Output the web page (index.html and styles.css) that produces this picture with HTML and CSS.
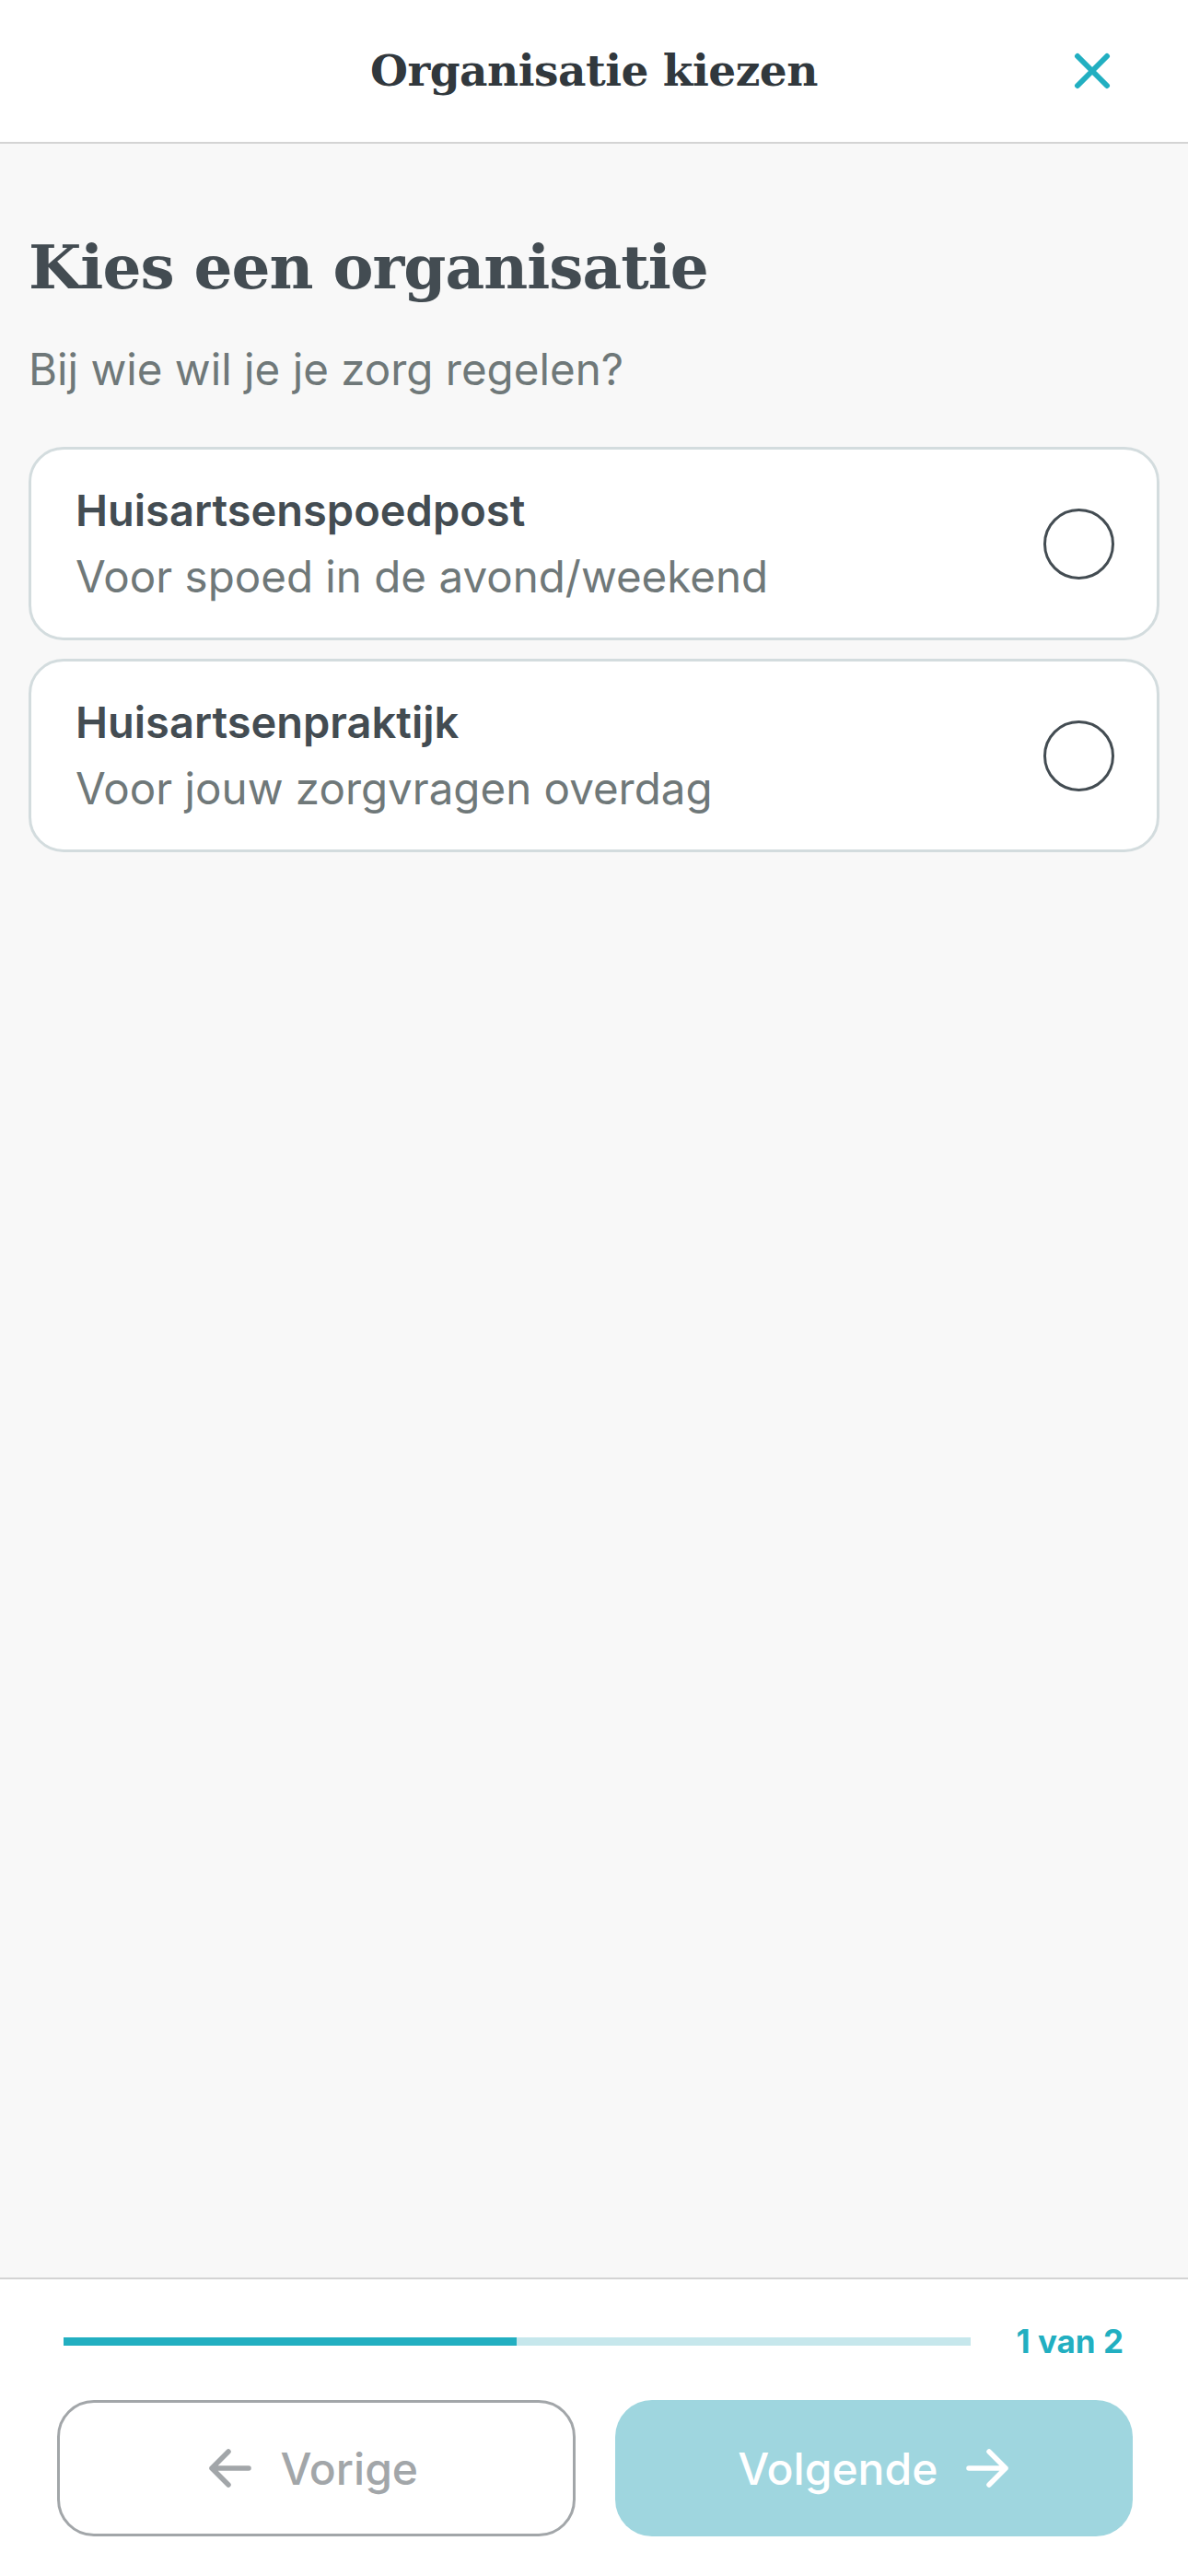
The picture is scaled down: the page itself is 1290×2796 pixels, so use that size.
FILE: index.html
```html
<!DOCTYPE html>
<html lang="nl">
<head>
<meta charset="utf-8">
<title>Organisatie kiezen</title>
<link rel="stylesheet" href="styles.css">
</head>
<body>
<div class="app">
  <header class="topbar">
    <div class="topbar-side"></div>
    <h1 class="topbar-title">Organisatie kiezen</h1>
    <div class="topbar-side topbar-side-right">
      <button class="close-btn" aria-label="Sluiten">
        <svg width="40" height="40" viewBox="0 0 40 40" fill="none">
          <path d="M4 4L36 36M36 4L4 36" stroke="#22afc1" stroke-width="6" stroke-linecap="round"/>
        </svg>
      </button>
    </div>
  </header>

  <main class="content">
    <h2 class="page-title">Kies een organisatie</h2>
    <p class="page-sub">Bij wie wil je je zorg regelen?</p>

    <div class="options">
      <label class="option">
        <div class="option-text">
          <span class="option-title">Huisartsenspoedpost</span>
          <span class="option-desc">Voor spoed in de avond/weekend</span>
        </div>
        <span class="radio"></span>
      </label>
      <label class="option">
        <div class="option-text">
          <span class="option-title">Huisartsenpraktijk</span>
          <span class="option-desc">Voor jouw zorgvragen overdag</span>
        </div>
        <span class="radio"></span>
      </label>
    </div>
  </main>

  <footer class="footer">
    <div class="progress-row">
      <div class="progress-track"><div class="progress-fill" style="width:50%"></div></div>
      <span class="progress-label">1 van 2</span>
    </div>
    <div class="nav-buttons">
      <button class="btn btn-prev">
        <svg width="48" height="44" viewBox="0 0 48 44" fill="none">
          <path d="M44 22H4M22 4L4 22L22 40" stroke="#a2a6a9" stroke-width="5.5" stroke-linecap="round" stroke-linejoin="round"/>
        </svg>
        <span>Vorige</span>
      </button>
      <button class="btn btn-next">
        <span>Volgende</span>
        <svg width="48" height="44" viewBox="0 0 48 44" fill="none">
          <path d="M4 22H44M26 4L44 22L26 40" stroke="#ffffff" stroke-width="5.5" stroke-linecap="round" stroke-linejoin="round"/>
        </svg>
      </button>
    </div>
  </footer>
</div>
</body>
</html>
```

FILE: styles.css
```css
* { box-sizing: border-box; }

html, body {
  margin: 0;
  padding: 0;
}

body {
  background: #f8f8f8;
  font-family: Inter, "Noto Sans", "Liberation Sans", sans-serif;
  color: #434c52;
}

.app {
  min-height: 2796px;
  display: flex;
  flex-direction: column;
}

.topbar {
  height: 156px;
  background: #ffffff;
  border-bottom: 2px solid #d4d4d4;
  display: grid;
  grid-template-columns: 1fr auto 1fr;
  align-items: center;
}

.topbar-title {
  margin: 0;
  font-family: "DejaVu Serif", "Liberation Serif", serif;
  font-weight: bold;
  font-size: 47px;
  color: #31383d;
  letter-spacing: -0.5px;
  padding-bottom: 2px;
}

.topbar-side-right {
  display: flex;
  justify-content: flex-end;
  padding-right: 84px;
}

.close-btn {
  border: 0;
  background: none;
  padding: 0;
  width: 40px;
  height: 40px;
  display: flex;
}

.content {
  flex: 1;
  padding: 89px 31px 0;
}

.page-title {
  margin: 0;
  font-family: "DejaVu Serif", "Liberation Serif", serif;
  font-weight: bold;
  font-size: 66px;
  line-height: 90px;
  color: #434c52;
  letter-spacing: -1px;
}

.page-sub {
  margin: 36px 0 0;
  font-size: 47.5px;
  line-height: 60px;
  color: #6f7879;
}

.options {
  margin-top: 54px;
  display: flex;
  flex-direction: column;
  gap: 20px;
}

.option {
  height: 210px;
  background: #ffffff;
  border: 3px solid #d3dcde;
  border-radius: 38px;
  padding: 0 46px 0 48px;
  display: flex;
  align-items: center;
  justify-content: space-between;
}

.option-text {
  display: flex;
  flex-direction: column;
  gap: 14px;
  padding-top: 2px;
}

.option-title {
  font-size: 47px;
  line-height: 56px;
  font-weight: 600;
  color: #434c52;
}

.option-desc {
  font-size: 47.5px;
  line-height: 60px;
  color: #6f7879;
}

.radio {
  width: 77px;
  height: 77px;
  border: 3px solid #434c52;
  border-radius: 50%;
  flex-shrink: 0;
}

.footer {
  background: #ffffff;
  border-top: 2px solid #d4d4d4;
  padding: 45px 60px 43px 62px;
}

.progress-row {
  display: flex;
  align-items: center;
  gap: 50px;
  padding-left: 7px;
  padding-right: 10px;
}

.progress-track {
  flex: 1;
  height: 9px;
  background: #c6e7ec;
}

.progress-fill {
  height: 100%;
  background: #22afc1;
}

.progress-label {
  font-size: 35px;
  line-height: 44px;
  font-weight: 700;
  color: #22afc1;
}

.nav-buttons {
  margin-top: 42px;
  display: grid;
  grid-template-columns: 1fr 1fr;
  gap: 43px;
}

.btn {
  height: 148px;
  border-radius: 40px;
  display: flex;
  align-items: center;
  justify-content: center;
  gap: 30px;
  font-family: Inter, "Noto Sans", "Liberation Sans", sans-serif;
  font-size: 48px;
  font-weight: 500;
  padding: 0;
}

.btn-prev {
  background: #ffffff;
  border: 3px solid #a2a6a9;
  color: #a2a6a9;
  padding-right: 6px;
}

.btn-next {
  background: #9fd6df;
  border: 0;
  color: #ffffff;
}
```
